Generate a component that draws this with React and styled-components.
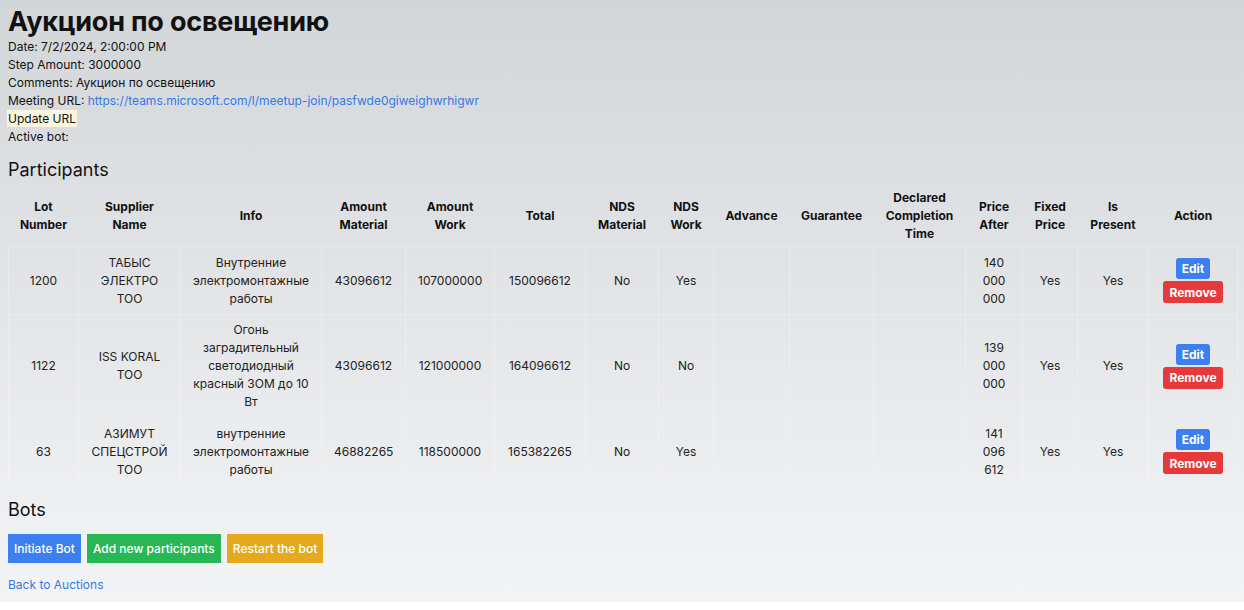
import React from 'react';
import styled, { createGlobalStyle } from 'styled-components';

const GlobalStyle = createGlobalStyle`
  body {
    margin: 0;
    background: #ffffff;
    font-family: Inter, 'Liberation Sans', sans-serif;
    color: #111;
  }
`;

const Page = styled.div`
  padding: 6px 7px 8px 8px;
  background: linear-gradient(to bottom, #d3d6d9, #f3f4f6);
  font-size: 12px;
  line-height: 18px;
`;

const Title = styled.h1`
  margin: 0;
  font-size: 27px;
  line-height: 32px;
  font-weight: 700;
  letter-spacing: -0.2px;
`;

const Line = styled.div`
  line-height: 18px;
`;

const Link = styled.a`
  color: #3478e5;
  text-decoration: none;
`;

const Highlight = styled.span`
  display: inline-block;
  margin-left: -1px;
  padding: 0 1px;
  line-height: 17px;
  background: #fbf7df;
`;

const SectionTitle = styled.h2`
  margin: ${({ $top }) => $top}px 0 4px;
  font-size: 18px;
  line-height: 24px;
  font-weight: 400;
`;

const Table = styled.table`
  width: 100%;
  table-layout: fixed;
  border-collapse: collapse;
  text-align: center;

  th {
    padding: 3px 10px;
    font-weight: 700;
    line-height: 18px;
    vertical-align: middle;
  }

  td {
    padding: 6px 12px;
    color: #222;
    line-height: 18px;
    vertical-align: middle;
    border: 1px solid rgba(255, 255, 255, 0.25);
  }
`;

const ActionCell = styled.td`
  && {
    padding: 11px 4px;
  }
`;

const SmallButton = styled.button`
  display: block;
  margin: ${({ $first }) => ($first ? '0 auto' : '2px auto 0')};
  padding: 0 6px;
  height: ${({ $first }) => ($first ? 21 : 22)}px;
  border: none;
  border-radius: 3px;
  background: ${({ $color }) => $color};
  color: #fff;
  font-family: inherit;
  font-size: 12px;
  font-weight: 700;
`;

const ButtonRow = styled.div`
  display: flex;
  gap: 6px;
  margin-top: 12px;
`;

const Button = styled.button`
  height: 29px;
  padding: 0 6px;
  border: none;
  background: ${({ $color }) => $color};
  color: #fff;
  font-family: inherit;
  font-size: 12px;
  font-weight: 500;
`;

const BackLink = styled(Link)`
  display: block;
  margin-top: 13px;
`;

const widths = [70, 102, 141, 84, 89, 91, 73, 55, 76, 84, 92, 57, 55, 71, 89];

const headers = [
  'Lot Number', 'Supplier Name', 'Info', 'Amount Material', 'Amount Work', 'Total',
  'NDS Material', 'NDS Work', 'Advance', 'Guarantee', 'Declared Completion Time',
  'Price After', 'Fixed Price', 'Is Present', 'Action',
];

const rows = [
  ['1200', 'ТАБЫС ЭЛЕКТРО ТОО', 'Внутренние электромонтажные работы', '43096612', '107000000', '150096612', 'No', 'Yes', '', '', '', '140 000 000', 'Yes', 'Yes'],
  ['1122', 'ISS KORAL ТОО', 'Огонь заградительный светодиодный красный ЗОМ до 10 Вт', '43096612', '121000000', '164096612', 'No', 'No', '', '', '', '139 000 000', 'Yes', 'Yes'],
  ['63', 'АЗИМУТ СПЕЦСТРОЙ ТОО', 'внутренние электромонтажные работы', '46882265', '118500000', '165382265', 'No', 'Yes', '', '', '', '141 096 612', 'Yes', 'Yes'],
];

const App = () => (
  <>
    <GlobalStyle />
    <Page>
      <Title>Аукцион по освещению</Title>
      <Line>Date: 7/2/2024, 2:00:00 PM</Line>
      <Line>Step Amount: 3000000</Line>
      <Line>Comments: Аукцион по освещению</Line>
      <Line>
        Meeting URL:{' '}
        <Link href="#">https://teams.microsoft.com/l/meetup-join/pasfwde0giweighwrhigwr</Link>
      </Line>
      <Line>
        <Highlight>Update URL</Highlight>
      </Line>
      <Line>Active bot:</Line>

      <SectionTitle $top={12}>Participants</SectionTitle>
      <Table>
        <colgroup>
          {widths.map((w, i) => (
            <col key={i} style={{ width: w }} />
          ))}
        </colgroup>
        <thead>
          <tr>
            {headers.map((h) => (
              <th key={h}>{h}</th>
            ))}
          </tr>
        </thead>
        <tbody>
          {rows.map((row) => (
            <tr key={row[0]}>
              {row.map((cell, i) => (
                <td key={i}>{cell}</td>
              ))}
              <ActionCell>
                <SmallButton $first $color="#3b7ff0">Edit</SmallButton>
                <SmallButton $color="#e5393c">Remove</SmallButton>
              </ActionCell>
            </tr>
          ))}
        </tbody>
      </Table>

      <SectionTitle $top={12}>Bots</SectionTitle>
      <ButtonRow>
        <Button $color="#3b7ff0">Initiate Bot</Button>
        <Button $color="#27b855">Add new participants</Button>
        <Button $color="#e6a81c">Restart the bot</Button>
      </ButtonRow>
      <BackLink href="#">Back to Auctions</BackLink>
    </Page>
  </>
);

export default App;
